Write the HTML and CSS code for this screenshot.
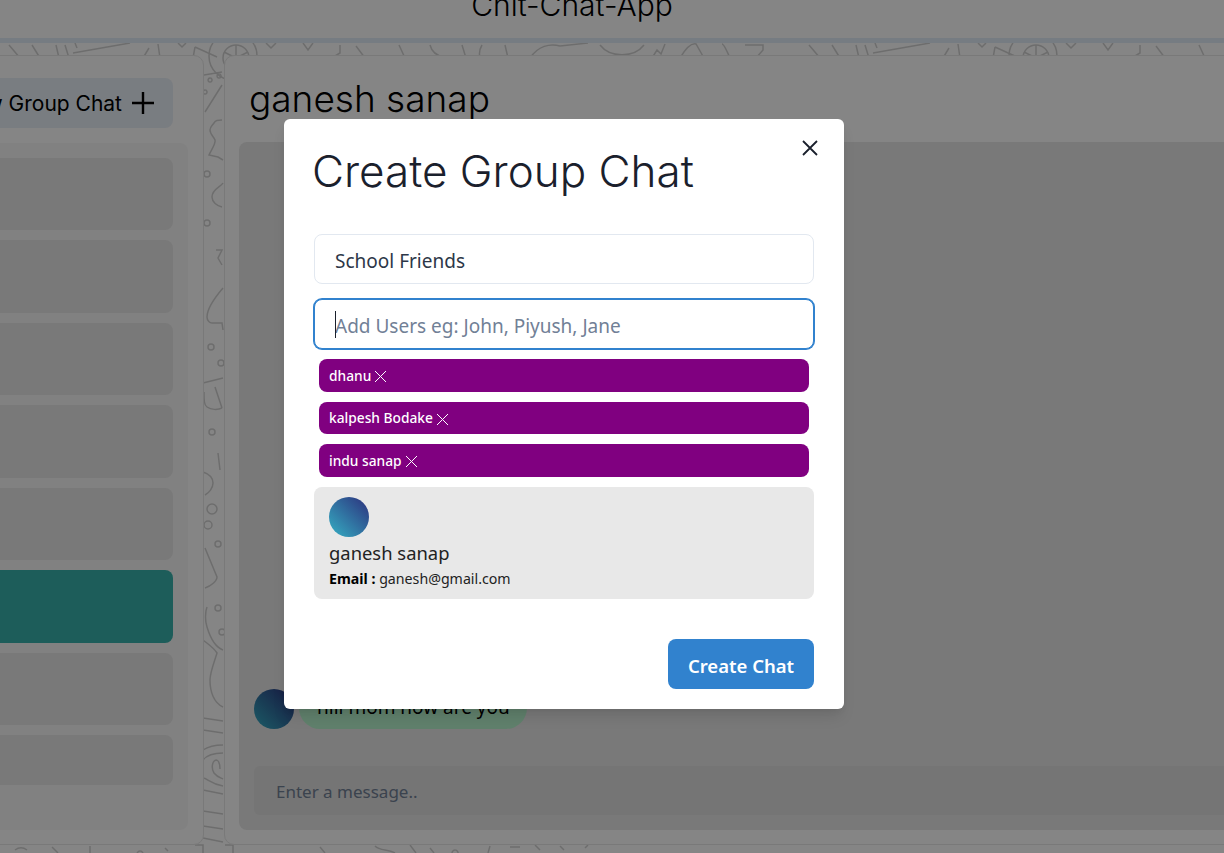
FILE: index.html
```html
<!DOCTYPE html>
<html lang="en">
<head>
<meta charset="utf-8">
<title>Chit-Chat-App</title>
<link rel="stylesheet" href="styles.css">
</head>
<body>
<div class="viewport">
  <svg class="doodles" width="1224" height="853" viewBox="0 0 1224 853" aria-hidden="true">
    <g id="tile-top">
      <path d="M9 45l11 13M32 45l8 13M56 45l3 13M65 45l4 13M73 53L130 43M75 43l2 5M143 58l6-10M158 44l2 14M178 43l4 4 4-4M195 47l22 10M195 47l-2 11"/>
      <circle cx="233" cy="56" r="24"/><circle cx="236" cy="58" r="13"/>
      <path d="M236 45v13M224 52l12 6M248 52l-12 6"/>
      <path d="M266 43l5 5 5-5M303 43l5 7 5-7M340 45v8l-5 3M356 46l9 12M399 45l6 13M430 45c2 8 8 11 14 12M462 45l4 13M482 45c-3 5-3 9-2 13M505 45l3 13M530 58c8-12 20-15 30-12l28-3M600 45c10 13 34 13 44 0M652 58l5-8 4 4 4-10M680 58c6-10 12-15 16-14l8 14M722 44c2 0 5 7 8 14M745 45h18v5l-7 8"/>
    </g>
    <use href="#tile-top" x="800"/>
    <path d="M204 75l18-3M205 112l17-27M210 78a2 2 0 1 0 .1 0M219 74a2 2 0 1 0 .1 0M205 90a2 2 0 1 0 .1 0"/>
    <path d="M222 120c-4 0-7 0-8 3-2 3-4 4-4 7 0 4 4 7 5 10 1 4-4 10-6 15l9 2 5 3"/>
    <circle cx="207" cy="174" r="3"/><path d="M223 183c-2 4-11 6-11 14 0 5 5 9 10 10"/>
    <circle cx="207" cy="223" r="3"/><path d="M216 250h6l-4 8 4 7M223 288c-6 7-16 20-16 29 0 4 3 6 5 6l10 0 1 7"/>
    <circle cx="211" cy="347" r="3"/><circle cx="221" cy="363" r="3"/>
    <path d="M203 383l20-5M215 387l7 21M204 392c0 8 0 13 3 15 4 3 11 3 15 1"/>
    <circle cx="212" cy="432" r="3"/>
    <path d="M218 453l2 17M203 472c6 2 10 6 10 11s-4 10-8 12"/>
    <circle cx="212" cy="509" r="5"/><circle cx="208" cy="525" r="4"/><circle cx="218" cy="544" r="3"/>
    <path d="M205 548l12 29c0 4-6 9-12 11"/>
    <circle cx="218" cy="608" r="3"/><circle cx="222" cy="632" r="3"/>
    <path d="M207 607c-2 5-2 14 0 20 3 10 8 20 16 23M203 640c5 4 11 8 14 13-2 7-7 19-7 27 0 12 4 23 13 27"/>
    <path d="M203 718l20 3M203 730l20 3M203 750c6-4 14-5 20-5M203 760c4-5 12-7 20-7M217 760c-5 0-6 8-3 13 3 4 7 5 9 6M217 760c3 2 3 6 3 9M203 778c4 0 8 6 20 8M203 790l20 4M203 811l20 3M203 826l20 3M203 838l20 4"/>
    <path d="M15 850c4-3 8-3 12 0M52 847l6 6M90 846v7M140 851a3 3 0 1 0 .1 0M165 848l3 3M195 845h8v8M225 845h8v8M320 847l5 6M375 846c5 5 12 3 20 7M410 845l6 8M430 848l4 5M455 850a3 3 0 1 0 .1 0M490 846l-2 7M510 847h10M535 845l5 5M560 846l4 4M585 848l3-3"/>
  </svg>

  <div class="page">
    <header class="app-header">
      <h1 class="app-title">Chit-Chat-App</h1>
    </header>
    <main class="columns">
      <aside class="side-panel">
        <button class="new-group" type="button">
          <span>New Group Chat</span>
          <svg class="plus" width="22" height="22" viewBox="0 0 22 22" aria-hidden="true"><path d="M0 11h22M11 0v22"/></svg>
        </button>
        <div class="chat-list">
          <div class="chat-item"></div>
          <div class="chat-item"></div>
          <div class="chat-item"></div>
          <div class="chat-item"></div>
          <div class="chat-item"></div>
          <div class="chat-item chat-item-active"></div>
          <div class="chat-item"></div>
          <div class="chat-item chat-item-short"></div>
        </div>
      </aside>
      <section class="chat-panel">
        <h2 class="chat-title">ganesh sanap</h2>
        <div class="chat-box">
          <div class="messages">
            <div class="avatar avatar-dim"></div>
            <div class="bubble">hiii mom how are you</div>
          </div>
          <input class="message-input" type="text" placeholder="Enter a message..">
        </div>
      </section>
    </main>
  </div>

  <div class="overlay"></div>

  <div class="modal" role="dialog" aria-label="Create Group Chat">
    <button class="modal-close" type="button" aria-label="Close">
      <svg width="16" height="16" viewBox="0 0 16 16" aria-hidden="true"><path d="M1 1l14 14M15 1L1 15"/></svg>
    </button>
    <h2 class="modal-title">Create Group Chat</h2>
    <div class="modal-body">
      <input class="field" type="text" value="School Friends">
      <div class="field-wrap">
        <input class="field field-focus" type="text" placeholder="Add Users eg: John, Piyush, Jane">
      </div>
      <div class="chips">
        <div class="chip"><span>dhanu</span><svg class="chip-x" width="13" height="13" viewBox="0 0 13 13" aria-hidden="true"><path d="M1 1l11 11M12 1L1 12"/></svg></div>
        <div class="chip"><span>kalpesh Bodake</span><svg class="chip-x" width="13" height="13" viewBox="0 0 13 13" aria-hidden="true"><path d="M1 1l11 11M12 1L1 12"/></svg></div>
        <div class="chip"><span>indu sanap</span><svg class="chip-x" width="13" height="13" viewBox="0 0 13 13" aria-hidden="true"><path d="M1 1l11 11M12 1L1 12"/></svg></div>
      </div>
      <div class="user-card">
        <div class="avatar avatar-bright"></div>
        <div class="user-name">ganesh sanap</div>
        <div class="user-email"><b>Email : </b>ganesh@gmail.com</div>
      </div>
    </div>
    <div class="modal-footer">
      <button class="create-btn" type="button">Create Chat</button>
    </div>
  </div>
</div>
</body>
</html>
```

FILE: styles.css
```css
* { box-sizing: border-box; }

html, body {
  margin: 0;
  height: 100%;
  overflow: hidden;
}

body {
  font-family: "Noto Sans", "Open Sans", sans-serif;
  color: #1a202c;
  background: #fff;
}

.viewport {
  position: relative;
  width: 1224px;
  height: 853px;
  overflow: hidden;
  background: #fff;
}

.doodles {
  position: absolute;
  left: 0;
  top: 0;
  fill: none;
  stroke: #d2d2d2;
  stroke-width: 1.5;
}

.page {
  position: relative;
  width: 1304px;
  margin-left: -40px;
}

.app-header {
  height: 43px;
  background: #fff;
  border-bottom: 5px solid #e3eefa;
  padding-right: 80px;
  display: flex;
  justify-content: center;
  overflow: hidden;
}

.app-title {
  margin: -13px 0 0;
  font-family: Inter, sans-serif;
  font-weight: 300;
  font-size: 30px;
  line-height: 36px;
  color: #000;
}

.columns {
  display: flex;
  gap: 20px;
  padding-top: 12px;
}

.side-panel {
  flex: none;
  width: 244px;
  height: 790px;
  background: #fff;
  border: 1px solid #e8e8e8;
  border-radius: 10px;
  padding: 22px 15px 14px;
  display: flex;
  flex-direction: column;
}

.new-group {
  flex: none;
  height: 50px;
  margin-right: 15px;
  border: 0;
  border-radius: 8px;
  background: #e9eff7;
  display: flex;
  align-items: center;
  justify-content: flex-end;
  gap: 10px;
  padding: 0 19px 0 0;
  font-family: Inter, sans-serif;
  font-size: 21px;
  color: #000;
  white-space: nowrap;
}

.plus {
  flex: none;
  fill: none;
  stroke: #000;
  stroke-width: 2.4;
}

.chat-list {
  margin-top: 15px;
  flex: 1;
  background: #f8f8f8;
  border-radius: 8px;
  padding: 14.9px 15px 15px;
  display: flex;
  flex-direction: column;
  gap: 10px;
}

.chat-item {
  height: 72.5px;
  flex: none;
  background: #e8e8e8;
  border-radius: 8px;
}

.chat-item-active { background: #38b2ac; }
.chat-item-short { height: 50px; }

.chat-panel {
  flex: none;
  width: 1060px;
  height: 790px;
  background: #fff;
  border: 1px solid #e8e8e8;
  border-radius: 10px;
  padding: 0 14px 14px;
  display: flex;
  flex-direction: column;
}

.chat-title {
  margin: 0;
  padding: 18px 0 0 10px;
  height: 86px;
  font-family: Inter, sans-serif;
  font-weight: 300;
  font-size: 37px;
  line-height: 50px;
  color: #000;
}

.chat-box {
  flex: 1;
  background: #e8e8e8;
  border-radius: 8px;
  padding: 15px;
  display: flex;
  flex-direction: column;
  justify-content: flex-end;
}

.messages {
  display: flex;
  align-items: flex-end;
  gap: 5px;
  margin-bottom: 37px;
}

.avatar {
  width: 40px;
  height: 40px;
  border-radius: 50%;
  flex: none;
}

.avatar-dim,
.avatar-bright {
  background: linear-gradient(to top right, #35b0c4, #2c2f7c);
}

.bubble {
  height: 42px;
  padding: 0 18px;
  width: 228px;
  border-radius: 21px;
  background: #b9f5d0;
  font-size: 19px;
  line-height: 40px;
  white-space: nowrap;
  color: #000;
}

.message-input {
  height: 49px;
  width: 100%;
  border: 0;
  border-radius: 6px;
  background: #e0e0e0;
  padding: 2px 22px 0;
  font: 17px "Noto Sans", sans-serif;
  outline: none;
}

.message-input::placeholder { color: #718096; opacity: 1; }

.overlay {
  position: absolute;
  inset: 0;
  background: rgba(0, 0, 0, .48);
}

.modal {
  position: absolute;
  left: 284px;
  top: 119px;
  width: 560px;
  height: 590px;
  background: #fff;
  border-radius: 6px;
  box-shadow: 0 10px 15px -3px rgba(0, 0, 0, .1), 0 4px 6px -2px rgba(0, 0, 0, .05);
  display: flex;
  flex-direction: column;
}

.modal-close {
  position: absolute;
  right: 26px;
  top: 21px;
  width: 16px;
  height: 16px;
  padding: 0;
  border: 0;
  background: none;
  display: block;
}

.modal-close svg {
  display: block;
  fill: none;
  stroke: #1a202c;
  stroke-width: 1.8;
}

.modal-title {
  margin: 0;
  padding: 26px 30px 0 28px;
  height: 115px;
  font-family: Inter, sans-serif;
  font-weight: 300;
  font-size: 44px;
  line-height: 52px;
  color: #1a202c;
}

.modal-body {
  padding: 0 30px;
  display: flex;
  flex-direction: column;
}

.field {
  display: block;
  width: 100%;
  height: 50px;
  border: 1px solid #e2e8f0;
  border-radius: 8px;
  padding: 3px 20px 0;
  font: 19px "Noto Sans", sans-serif;
  color: #2d3748;
  background: #fff;
  outline: none;
}

.field-wrap {
  position: relative;
  margin-top: 15px;
}

.field-wrap::after {
  content: "";
  position: absolute;
  left: 21px;
  top: 12px;
  width: 1px;
  height: 27px;
  background: #1a202c;
}

.field-focus {
  border-color: #3182ce;
  box-shadow: 0 0 0 1px #3182ce;
}

.field-focus::placeholder { color: #718096; opacity: 1; }

.chips {
  margin-top: 10px;
  padding: 0 5px;
  display: flex;
  flex-direction: column;
  gap: 10px;
}

.chip {
  height: 32.5px;
  background: #800080;
  border-radius: 8px;
  color: #fff;
  font-size: 13.75px;
  font-weight: 500;
  padding-left: 10px;
  display: flex;
  align-items: center;
  gap: 3px;
}

.chip-x {
  fill: none;
  stroke: #fff;
  stroke-width: 1;
  margin-top: 3px;
}

.user-card {
  margin-top: 10px;
  height: 112px;
  background: #e8e8e8;
  border-radius: 8px;
  padding: 10px 15px;
  color: #000;
}

.user-name {
  margin-top: 4px;
  font-size: 18.4px;
  line-height: 24px;
  color: #222;
}

.user-email {
  margin-top: 3px;
  font-size: 14.2px;
  line-height: 22px;
  color: #222;
}

.user-email b { color: #000; }

.modal-footer {
  margin-top: auto;
  padding: 0 30px 20px;
  display: flex;
  justify-content: flex-end;
}

.create-btn {
  width: 146px;
  height: 50px;
  border: 0;
  border-radius: 8px;
  background: #3182ce;
  color: #fff;
  padding: 2px 0 0;
  font: 600 18.5px "Noto Sans", sans-serif;
}
```
